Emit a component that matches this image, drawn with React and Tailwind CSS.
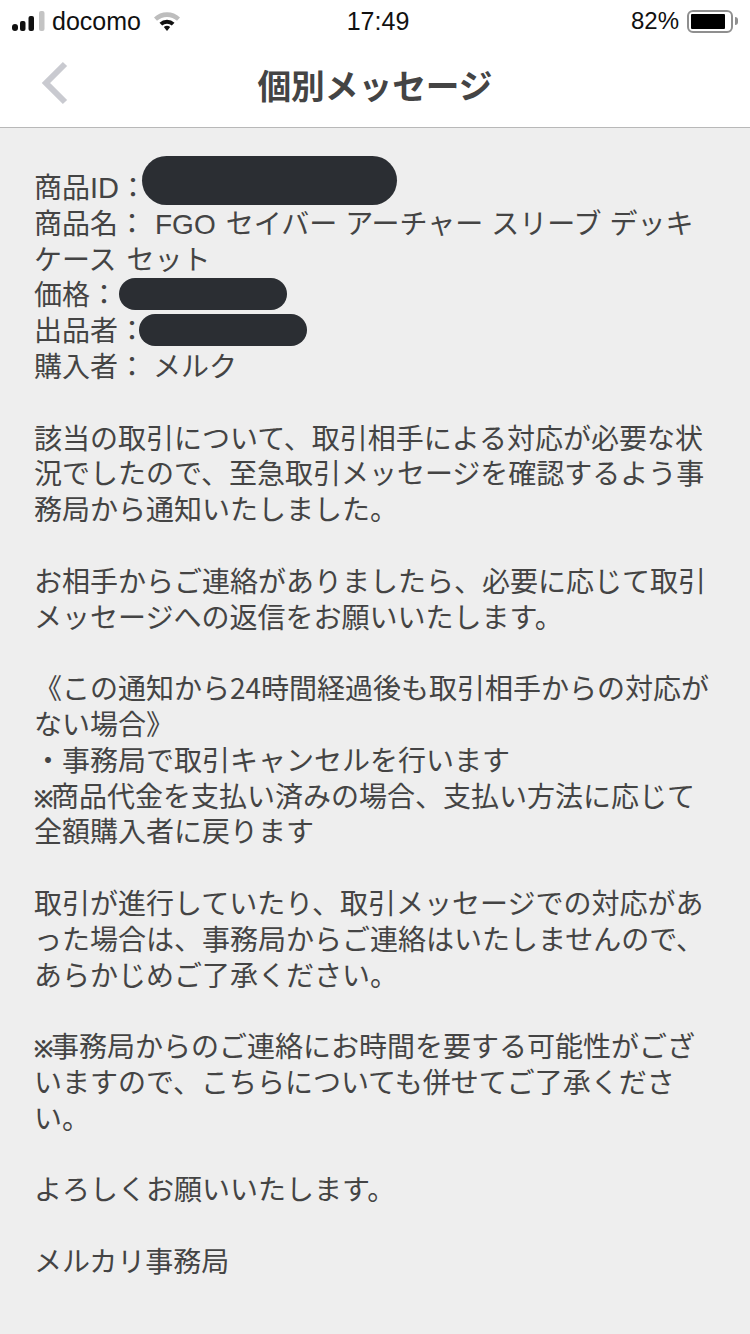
const F = { fontFamily: '"Noto Sans CJK JP", "Noto Sans", sans-serif' };
const L = { fontFamily: '"Liberation Sans", sans-serif' };

function Pill({ className }) {
  return <span className={"absolute rounded-full bg-[#2b2e33] " + className} />;
}

function Mark() {
  return <span className="inline-block w-[17px] text-[23px] font-bold leading-none" style={L}>※</span>;
}

const paragraphs = [
  ["該当の取引について、取引相手による対応が必要な状", "況でしたので、至急取引メッセージを確認するよう事", "務局から通知いたしました。"],
  ["お相手からご連絡がありましたら、必要に応じて取引", "メッセージへの返信をお願いいたします。"],
  ["《この通知から24時間経過後も取引相手からの対応が", "ない場合》", "・事務局で取引キャンセルを行います", [<Mark key="m" />, "商品代金を支払い済みの場合、支払い方法に応じて"], "全額購入者に戻ります"],
  ["取引が進行していたり、取引メッセージでの対応があ", "った場合は、事務局からご連絡はいたしませんので、", "あらかじめご了承ください。"],
  [[<Mark key="m" />, "事務局からのご連絡にお時間を要する可能性がござ"], "いますので、こちらについても併せてご了承くださ", "い。"],
  ["よろしくお願いいたします。"],
  ["メルカリ事務局"],
];

export default function App() {
  return (
    <div className="w-[750px] h-[1334px] overflow-hidden bg-[#eeeeee] flex flex-col" style={F}>
      <div className="bg-white h-[128px] shrink-0 border-b border-[#b8b8b8] flex flex-col">
        <div className="h-[42px] flex items-center justify-between pl-[12px] pr-[12px] text-[#111]" style={L}>
          <div className="flex items-center w-[243px]">
            <svg width="33" height="21" viewBox="0 0 33 21" className="shrink-0">
              <rect x="0" y="13" width="6" height="7" rx="3" fill="#111" />
              <rect x="8" y="10" width="5.5" height="10" rx="2" fill="#111" />
              <rect x="16.5" y="5" width="5.5" height="15" rx="2" fill="#111" />
              <rect x="27" y="0" width="5.5" height="20" rx="2" fill="#c4c4c4" />
            </svg>
            <span className="ml-[7px] leading-none text-[25px]">docomo</span>
            <svg width="28" height="22" viewBox="0 0 28 22" className="ml-[12px] shrink-0">
              <path d="M1 7.5 A19 19 0 0 1 27 7.5 L24 10.8 A15 15 0 0 0 4 10.8 Z" fill="#bdbdbd" />
              <path d="M6.5 12.8 A11 11 0 0 1 21.5 12.8 L18.8 15.6 A7 7 0 0 0 9.2 15.6 Z" fill="#111" />
              <path d="M10.8 17 A5 5 0 0 1 17.2 17 L14 21 Z" fill="#111" />
            </svg>
          </div>
          <span className="leading-none text-[25px]">17:49</span>
          <div className="flex items-center justify-end w-[237px]">
            <span className="leading-none text-[24px]">82%</span>
            <div className="ml-[8px] w-[46px] h-[23px] rounded-[6px] border-2 border-[#8f8f8f] p-[2px] flex">
              <div className="w-[34px] bg-black rounded-[1px]" />
            </div>
            <div className="ml-[2px] w-[3px] h-[8px] rounded-r-full bg-[#8f8f8f]" />
          </div>
        </div>
        <div className="relative flex-1 flex items-center justify-center">
          <svg width="30" height="44" viewBox="0 0 30 44" className="absolute left-[41px] top-[19px]">
            <path d="M24 3 L5 22 L24 41" fill="none" stroke="#c9cad0" strokeWidth="6" />
          </svg>
          <span className="text-[33.7px] font-bold text-[#444444] leading-none pt-[1px]">個別メッセージ</span>
        </div>
      </div>

      <div className="pl-[34px] pr-[20px] pt-[41px] text-[28px] leading-[35.8px] text-[#444444] whitespace-nowrap">
        <div className="relative h-[35.8px]">
          商品<span className="text-[29px] leading-none" style={L}>ID</span>：
          <Pill className="left-[108px] top-[-13px] w-[255px] h-[49px]" />
        </div>
        <div className="h-[35.8px]">
          商品名：<span className="ml-[9px] text-[28px] leading-none" style={L}>FGO</span>
          <span className="ml-[10px]">セイバー</span>
          <span className="ml-[8px]">アーチャー</span>
          <span className="ml-[8px]">スリーブ</span>
          <span className="ml-[8px]">デッキ</span>
        </div>
        <div className="h-[35.8px]">ケース<span className="ml-[10px]">セット</span></div>
        <div className="relative h-[35.8px]">
          価格：
          <Pill className="left-[85px] top-[2px] w-[168px] h-[32px]" />
        </div>
        <div className="relative h-[35.8px]">
          出品者：
          <Pill className="left-[105px] top-[2px] w-[168px] h-[32px]" />
        </div>
        <div className="h-[35.8px]">購入者：<span className="ml-[7px]">メルク</span></div>
        {paragraphs.map((lines, i) => (
          <div key={i} className="mt-[35.8px]">
            {lines.map((l, j) => (
              <div key={j} className="h-[35.8px]">{l}</div>
            ))}
          </div>
        ))}
      </div>
    </div>
  );
}
